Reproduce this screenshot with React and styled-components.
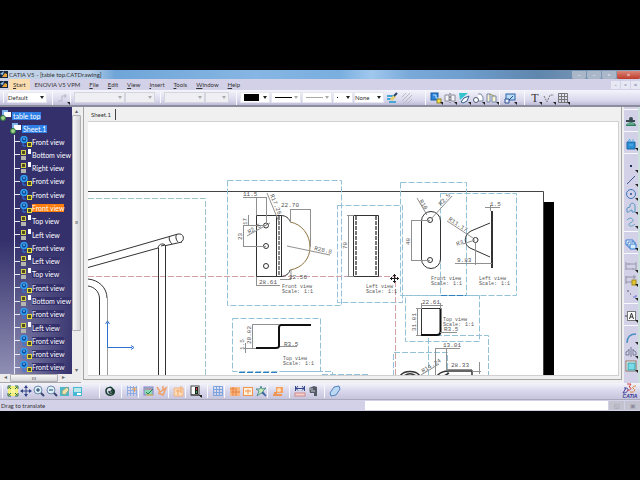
import React from 'react';
import styled, { createGlobalStyle } from 'styled-components';

const MENUS = ['Start', 'ENOVIA V5 VPM', 'File', 'Edit', 'View', 'Insert', 'Tools', 'Window', 'Help'];

const VIEWS = [
    'Front view', 'Bottom view', 'Right view', 'Front view', 'Front view', 'Front view',
    'Top view', 'Left view', 'Front view', 'Left view', 'Top view', 'Front view',
    'Bottom view', 'Front view', 'Left view', 'Front view', 'Front view', 'Front view',
];
const ACTIVE_VIEW = 5;

const RAIL = [
    ['workbench'],
    ['select'],
    ['point', 'line', 'circle', 'profile', 'spline'],
    ['instantiate'],
    ['dimension', 'chained', 'datum'],
    ['frame'],
    ['corner', 'symmetry', 'area'],
];

const VIEW_TOOLS = [
    { lead: 2, icons: ['fit', 'pan', 'zoomIn', 'zoomOut', 'normal', 'multi'] },
    { lead: 15, icons: ['update'] },
    { lead: 5, icons: ['snap'] },
    { lead: 0, icons: ['analysis', 'constraint'] },
    { lead: 0, icons: ['filter'] },
    { lead: 0, icons: ['dressup'] },
    { lead: 5, icons: ['grid'] },
    { lead: 0, icons: ['orangeGrid', 'orangeBox', 'star'] },
    { lead: 0, icons: ['orangeShape'] },
    { lead: 5, icons: ['measure', 'measureItem'] },
    { lead: 5, icons: ['eraser'] },
];

// 아이콘 (12 x 12)
const GLYPHS = {
    polyline: <path d="M1 9h4V4h5M8 2v4" stroke="#b5b5c4" />,
    paint: <><path d="M1 4h6M1 7h6M3 10h7" stroke="#49a7d8" strokeWidth="2" /><path d="M5 8l4-4" stroke="#e8cf74" strokeWidth="3" /><path d="M8 4l3-3" stroke="#28446d" strokeWidth="2" /></>,
    hatch: <path d="M1 5l4-4M1 9l8-8M2 12l9-9M6 12l5-5" stroke="#b9b9c2" />,
    viewFront: <><rect x="1" y="1" width="7" height="7" fill="#2f83d8" stroke="#175a9f" /><path d="M3 3h3v3h3" stroke="#bfe3ff" /><rect x="7" y="7" width="4" height="4" fill="#f4e04a" stroke="#8f8830" /></>,
    section: <><path d="M1 3h4v6H1zM7 3h4v6H7z" fill="#f4f4fb" stroke="#8a8a94" /><path d="M6 1v10" stroke="#666" strokeDasharray="2 1" /></>,
    detail: <><path d="M1 1h9L2 8z" fill="#35c3cf" /><path d="M3 10l3-4 5-2-2 5-4 2z" fill="#fff" stroke="#355f93" /></>,
    clip: <><path d="M6 2h3l2 3v4H6" fill="#fff" stroke="#7887a4" /><circle cx="4" cy="8" r="2.5" fill="#fff" stroke="#4f5c78" /></>,
    broken: <><path d="M1 2h3v8H1zM6 4h4v6H6z" fill="#f8f5cd" stroke="#7786aa" /><path d="M4 2l4 2" stroke="#8d934c" /></>,
    wizard: <><rect x="2" y="2" width="9" height="6" fill="#b9dcf7" stroke="#2d60a8" /><path d="M1 11V7h4v4zM5 8l4-4" fill="#e8f1fb" stroke="#284c8b" /></>,
    rough: <path d="M1 4l3 6 3-7h4" stroke="#777" strokeDasharray="2 1" />,
    table: <path d="M1.500 1.500h9v9h-9zM1 4.500h10M1 7.500h10M4.500 1v10M7.500 1v10" stroke="#777" />,
    workbench: <><path d="M1 10c0-5 10-5 10 0z" fill="#2f7c62" /><path d="M1 4h9v2H1z" fill="#37474f" /><circle cx="6" cy="3" r="2" fill="#37474f" /><path d="M2 8h7" stroke="#8ed1a7" /></>,
    select: <><path d="M2 4h8v7H2z" fill="#2d8fd5" stroke="#1a67a8" /><path d="M3 3l2-2v3M8 1v3M4 7h4" stroke="#5ab4e8" /></>,
    point: <rect x="5" y="5" width="2" height="2" fill="#222f55" />,
    line: <path d="M2 10l8-8" stroke="#3f568c" />,
    circle: <><circle cx="6" cy="6" r="4.5" stroke="#3c78bb" /><circle cx="6" cy="6" r="1" fill="#234f8b" /></>,
    profile: <path d="M2 10V6l3-1V3c1-3 5-2 5 1v6H7V8C5 7 5 11 2 10z" stroke="#5698c3" />,
    spline: <path d="M2 4c3-3 5-2 6 0s-5 3-4 5 4 1 6-1" stroke="#5ba1bf" />,
    instantiate: <><path d="M1 2h7v5H1z" fill="#fff" stroke="#3379ce" /><path d="M3 4h7v5H3z" fill="#fff" stroke="#3379ce" /><path d="M5 6h6v5H5z" fill="#d6ebff" stroke="#3379ce" /></>,
    dimension: <path d="M1 2v8M11 2v8M1 4h10M1 9h10M4 3v2M8 8v2" stroke="#9898aa" />,
    chained: <><path d="M1 2v8M1 3h10M1 8h6M9 1v4" stroke="#9090a2" /><rect x="7" y="6" width="4" height="5" fill="#e4c52f" stroke="#a08c20" /></>,
    datum: <><path d="M2 3h2M5 6h1" stroke="#555" /><path d="M8 9h3V7" stroke="#6672d3" /></>,
    frame: <><rect x="2.500" y="1.500" width="8" height="9" fill="#fff" stroke="#777" /><path d="M4.500 9L6.500 3L8.500 9M5 7h3M0 6h2" stroke="#333" /></>,
    corner: <path d="M2 11C2 5 5 2 11 2" stroke="#4b8ec0" strokeWidth="1.5" />,
    symmetry: <path d="M6 1v10M4 3v6M8 3v6M4 4L1 6v3h3M8 4l3 2v3H8" stroke="#777d96" />,
    area: <><rect x="1" y="1" width="10" height="10" fill="#fff" stroke="#8c7462" /><rect x="3" y="3" width="7" height="7" fill="#78dbe5" stroke="#359fae" /></>,
    fit: <><rect x="1" y="1" width="10" height="10" fill="#f4ee7c" /><path d="M2 2l8 8M10 2l-8 8M1 4V1h3M8 1h3v3M1 8v3h3M8 11h3V8" stroke="#266c50" /><rect x="4" y="4" width="4" height="4" fill="#f8f5a0" /></>,
    pan: <><path d="M6 1v10M1 6h10" stroke="#34458a" /><path d="M4 3l2-3 2 3M4 9l2 3 2-3M3 4L0 6l3 2M9 4l3 2-3 2" fill="#34458a" /></>,
    zoomIn: <><circle cx="5" cy="5" r="4" fill="#d8f1f5" stroke="#7288ae" /><path d="M3 5h4M5 3v4" stroke="#26386b" /><path d="M8 8l3 3" stroke="#394671" strokeWidth="2" /></>,
    zoomOut: <><circle cx="5" cy="5" r="4" fill="#d8f1f5" stroke="#7288ae" /><path d="M3 5h4" stroke="#26386b" /><path d="M8 8l3 3" stroke="#394671" strokeWidth="2" /></>,
    normal: <><rect x="1" y="2" width="9" height="9" fill="#51b8cb" /><path d="M3 9V6l5-4 2 3-4 5z" fill="#efe1a7" stroke="#7aa48b" /></>,
    multi: <><rect x="1" y="2" width="9" height="9" fill="#49b8d5" /><path d="M2 3h7v4H2z" fill="#b8e8e8" /><path d="M5 9h4" stroke="#fff" strokeWidth="2" /></>,
    update: <><path d="M2 7c-1-6 8-6 7-1 0 3-4 3-4 0M10 5c2 6-7 7-8 2M10 5c-1-1-3 0-3 2" stroke="#163a2d" strokeWidth="1.5" /></>,
    snap: <><path d="M1.500 1v10M4.500 1v10M7.500 1v10M10.500 1v10M1 2.500h10M1 5.500h10M1 8.500h10" stroke="#8eaee2" /><path d="M6 4h5M8.500 2v5" stroke="#e9a55c" /></>,
    analysis: <><rect x="1" y="2" width="9" height="8" fill="#8ad8b4" stroke="#8a7ad0" /><path d="M2 4h7" stroke="#d256a5" /><path d="M3 7l2 2 5-5" stroke="#2d7f53" /><path d="M3 10h7" stroke="#e5c338" /></>,
    constraint: <path d="M1 2l3 5 6-4-3 7-5-2M7 1v5" stroke="#efa16a" strokeWidth="1.5" />,
    filter: <><path d="M1 3h9v8H1z" fill="#fbdcb8" stroke="#f3b080" /><path d="M3 6h5M5 4v6M8 1v7" stroke="#f3a86c" /></>,
    dressup: <><rect x="1" y="1" width="8" height="9" fill="#fff" stroke="#444" /><path d="M5 2h3v7H5z" fill="#222" /><path d="M6 4h1" stroke="#e33" strokeWidth="2" /><path d="M6 7h1" stroke="#3b5" strokeWidth="2" /><path d="M1 10h8l2 2" stroke="#333" /></>,
    grid: <path d="M1.500 1.500h9v9h-9zM1 4.500h10M1 7.500h10M4.500 1v10M7.500 1v10" stroke="#7ba3dd" />,
    orangeGrid: <><path d="M1 2h10v9H1z" fill="#f8b883" /><path d="M1 4h7M4 2v9M7 5v6M2 7h9" stroke="#e8803f" /></>,
    orangeBox: <><rect x="1.500" y="2.500" width="9" height="8" fill="#fff0d8" stroke="#ef9551" /><path d="M3 6h6M6 4v5" stroke="#ef9551" /></>,
    star: <><path d="M6 1l1 3 4-1-3 3 2 4-4-2-4 3 2-5-3-2h4z" fill="#c7efb2" stroke="#5a9098" /><path d="M7 7l4 4" stroke="#345ea8" strokeWidth="1.5" /></>,
    orangeShape: <><path d="M4 2h7v6H4z" fill="#f5a35f" /><path d="M1 10h9M2 8h3" stroke="#ee9556" strokeWidth="2" /><circle cx="7" cy="5" r="2" fill="#ffe0b7" /></>,
    measure: <><path d="M1.500 1v5M10.500 1v5M1 3.500h10M4 1L2 3.500l2 2M8 1l2 2.500-2 2" stroke="#37478d" /><rect x="1" y="8" width="10" height="3" fill="#f7d4ca" stroke="#cf8a90" /></>,
    measureItem: <><path d="M2 3l5-2 3 1v9H7V8H3z" fill="#555b66" /><path d="M2 4h4M4 6h4" stroke="#c8cbd0" /></>,
    eraser: <path d="M1 8l4-6 5-1 1 3-4 6-5 1z" fill="#bcd9f4" stroke="#5381bd" />,
};

const Glyph = ({ name }) => (
    <svg width="12" height="12" viewBox="0 0 12 12" fill="none" aria-hidden="true">
        {GLYPHS[name]}
    </svg>
);

const Caret = ({ muted }) => (
    <svg width="4" height="3" viewBox="0 0 4 3" aria-hidden="true">
        <path d="M0 0h4L2 3z" fill={muted ? '#aaa' : '#222'} />
    </svg>
);

const Corner = () => (
    <CornerMark viewBox="0 0 3 3" aria-hidden="true"><path d="M0 0h3v3z" fill="#222" /></CornerMark>
);

const Tool = ({ name, size = 14, more, letter }) => (
    <ToolButton type="button" aria-label={name} $size={size}>
        {letter ? <Letter>{letter}</Letter> : <Glyph name={name} />}
        {more && <Corner />}
    </ToolButton>
);

const Picker = ({ label, width, value = '', muted, disabled, children }) => (
    <PickerBox $width={width} $disabled={disabled}>
        <select aria-label={label} disabled={disabled} defaultValue={value}>
            <option value={value}>{value}</option>
        </select>
        <PickerFace>
            <span>{children}</span>
            <Caret muted={muted || disabled} />
        </PickerFace>
    </PickerBox>
);

const Logo = () => (
    <svg width="8" height="9" viewBox="0 0 8 9" aria-hidden="true">
        <rect y="1" width="8" height="7" fill="#17263f" />
        <path d="M2 7l3-4 2 1v3z" fill="#e8a23c" />
        <path d="M0 4l4-3-1 4z" fill="#8fc0ea" />
    </svg>
);

const ViewIcon = ({ front }) => (
    <svg width="12" height="12" viewBox="0 0 12 12" fill="none" aria-hidden="true">
        {front ? (
            <>
                <circle cx="4" cy="3.5" r="3" fill="#0f4f9e" stroke="#2fa0f4" strokeWidth="1.5" />
                <path d="M3 7v3h3" stroke="#2c7be6" />
                <path d="M3 3h2" stroke="#9ed8ff" />
                <rect x="7.5" y="6.5" width="4" height="4" fill="#4a4a20" stroke="#e3dc3a" />
            </>
        ) : (
            <>
                <rect x="1.5" y="1.5" width="4" height="4" fill="#4a4a20" stroke="#d8d04a" />
                <rect x="1" y="7" width="5" height="4" fill="#b5b5b0" />
                <rect x="8" y="0" width="3" height="5" fill="#fff" />
            </>
        )}
    </svg>
);

const RootIcon = () => (
    <svg width="11" height="11" viewBox="0 0 11 11" aria-hidden="true">
        <rect x="2" y="0" width="6" height="5" fill="#7fb2e8" />
        <rect x="4" y="2" width="7" height="5" fill="#fff" />
        <circle cx="3" cy="8" r="2.5" fill="#9fcf8a" stroke="#2e7a3c" />
    </svg>
);

const Note = ({ x, y, title }) => (
    <text x={x} y={y}>
        <tspan>{title}</tspan>
        <tspan x={x} dy="5">Scale:</tspan>
        <tspan x={x + 22}>1:1</tspan>
    </text>
);

const Dim = ({ x, y, turn = 0, children }) => (
    <text className="dim" transform={`translate(${x} ${y}) rotate(${turn})`}>{children}</text>
);

const Drawing = () => (
    <SheetCanvas role="img" aria-label="table top drawing">
        <g transform="translate(-88 -122)" fill="none">
            <rect x="543" y="202" width="11" height="180" fill="#000" />
            <path d="M88 191.5H543.5V382" stroke="#444" />

            <g className="bound">
                <path d="M88 198.5H205.5V376" stroke="#9cc3c6" />
                <path d="M227.5 180.5H341.5V305.5H227.5z" />
                <path d="M337.5 205.5H402.5V302.5H337.5z" />
                <path d="M400.5 182.5H466.5V295.5H400.5z" />
                <path d="M440.5 193.5H516.5V295.5H440.5z" />
                <path d="M405.5 295.5H479.5V341.5H405.5z" />
                <path d="M428.5 376V335.5H488.5V376" />
                <path d="M393.5 376V352.5H447.5V376" />
                <path d="M232.5 318.5H320.5V371.5H232.5z" />
                <path d="M285 371.5H332.5V376M322 374.5H368" />
                <path d="M239 372.5H277M441 295.5H466" stroke="#2f7fc0" />
            </g>
            <path d="M88 276.5H395.5V376" stroke="#d3a0a6" strokeDasharray="6 2" />

            <g stroke="#333">
                <path d="M88 260L178 234M88 267.500L158 248M166 245.500L182 242" />
                <path d="M178 234c6-1 7 6 3 8M170 236c-2 2 0 6 2 8M177 234c-2 2-1 6 1 8M158 248c1-5 6-5 8-2M161 246l4-1" />
                <path d="M158.500 248V376M165.500 246V376M99.500 298V376" />
                <path d="M88 279C99 280 107 288 107 298M88 286C95 287 99 292 99.500 298" />
                <path d="M107.500 298V376" stroke="#999" />
            </g>
            <path d="M107.500 347.500V323M107.500 347.500H132M105.500 324l2-3 2 3M131 345.500l3 2-3 2" stroke="#2f6fce" />

            <g stroke="#333">
                <path d="M256.500 215.500H282M256.500 215.500V276.500H282M276.500 215V277M281.500 215V277" />
                <path d="M279 216V276" stroke="#888" strokeWidth="2" strokeDasharray="4 1" />
                <circle cx="266" cy="225.500" r="2.500" />
                <circle cx="266" cy="246" r="2.500" />
                <circle cx="266" cy="266" r="2.500" />
                <path d="M281 215.500c5 0 8 3 9 6M290 270c-1 4-4 6-9 6.500" />
                <path d="M290 222C302 224 310 235 310 247S302 268 290 270" stroke="#8e7442" />
                <path d="M353.500 215.500H378.500V276.500H353.500z" />
                <path d="M356 216V276M376 216V276" stroke="#777" strokeWidth="2" strokeDasharray="4 1" />
                <rect x="421.500" y="211.500" width="19" height="57" rx="9.500" />
                <circle cx="430" cy="220" r="2.500" />
                <circle cx="430" cy="260" r="2.500" />
                <path d="M490 223L471 231C463 235 464 245 470 248L490 257" />
                <circle cx="475.500" cy="240" r="2.500" />
                <path d="M492 211V268" strokeWidth="2" />
                <path d="M421.500 334V308.500H440" />
                <path d="M440.500 308V332Q440 335 437 335H421" stroke="#111" strokeWidth="2" />
                <path d="M311 325H281Q279 325 279 328V346Q279 348 276 348H256" stroke="#111" strokeWidth="2" />
                <path d="M400 376C404 370 416 370 420 376M404 376C408 373 412 373 416 376M437 376C440 372 444 371 449 371H472V376M444 376L449 373" strokeWidth="1.500" />
            </g>

            <g stroke="#909090">
                <path d="M290 209.500H311M290.500 209V222M310.500 209V247M243 197.500H266M256.500 197V215M266.500 197V225" />
                <path d="M248.500 215V226M243.500 225V246M243 225.500H266M243 246.500H266M247 236L270 223M267 193L279 222" />
                <path d="M287 246L330 255M256 285.500H280M256.500 277V286M280 279.500H291V270" />
                <path d="M348.500 215V276M347 215.500H354M347 276.500H354" />
                <path d="M411.500 220V260M411 220.500H430M411 260.500H430M417 198L427 215M431 219L452 196" />
                <path d="M447 221L473 238M463 244L475 240M475.500 243V265M455 263.500H492M485 207.500H500M490.500 205V211" />
                <path d="M421 305.500H443M421.500 303V309M440.500 303V309M417.500 308V335M416 308.500H421M416 335.500H421M440 332.500H457" />
                <path d="M436 348.500H460M435.500 348V376M446.500 348V370M447 369.500H472M421 375L439 364M479.500 362V374M472 371.500H481" />
                <path d="M252.500 324V348M252 324.500H279M244 348.500H256M245.500 343V353M280 346.500H297" />
            </g>

            <Dim x={281} y={207}>22.70</Dim>
            <Dim x={243} y={196}>11.5</Dim>
            <Dim x={270} y={195} turn={68}>R17.26</Dim>
            <Dim x={247} y={225} turn={-90}>17</Dim>
            <Dim x={242} y={240} turn={-90}>23</Dim>
            <Dim x={249} y={234} turn={-30}>R2.5</Dim>
            <Dim x={314} y={250} turn={12}>R28.8</Dim>
            <Dim x={259} y={284}>28.61</Dim>
            <Dim x={289} y={279}>22.56</Dim>
            <Dim x={347} y={249} turn={-90}>70</Dim>
            <Dim x={410} y={245} turn={-90}>40</Dim>
            <Dim x={419} y={201} turn={58}>R10</Dim>
            <Dim x={441} y={206} turn={-48}>R2.5</Dim>
            <Dim x={448} y={220} turn={34}>R11.17</Dim>
            <Dim x={457} y={246} turn={-20}>R3</Dim>
            <Dim x={457} y={262}>9.83</Dim>
            <Dim x={490} y={206}>1.5</Dim>
            <Dim x={422} y={304}>22.61</Dim>
            <Dim x={416} y={331} turn={-90}>31.01</Dim>
            <Dim x={444} y={331}>R3.5</Dim>
            <Dim x={443} y={347}>13.01</Dim>
            <Dim x={423} y={373} turn={-32}>R14.24</Dim>
            <Dim x={451} y={367}>28.33</Dim>
            <Dim x={251} y={344} turn={-90}>28.02</Dim>
            <Dim x={244} y={350} turn={-90}>1.5</Dim>
            <Dim x={284} y={346}>R3.5</Dim>

            <Note x={282} y={288} title="Front view" />
            <Note x={366} y={288} title="Left view" />
            <Note x={431} y={280} title="Front view" />
            <Note x={479} y={280} title="Left view" />
            <Note x={443} y={321} title="Top view" />
            <Note x={283} y={360} title="Top view" />

            <path d="M394.500 274V283M390 278.500H399M393 275.500h3M393 281.500h3M391.500 277v3M397.500 277v3" stroke="#222" />
        </g>
    </SheetCanvas>
);

const App = () => {
    return (
        <>
            <GlobalStyle />
            <Frame>
                <TitleBar>
                    <Logo />
                    <h1>CATIA V5 - [table top.CATDrawing]</h1>
                    <WindowButtons>
                        <button type="button" aria-label="help">–</button>
                        <button type="button" aria-label="minimize">–</button>
                        <button type="button" aria-label="restore">▫</button>
                        <button type="button" aria-label="close" className="close">×</button>
                    </WindowButtons>
                </TitleBar>

                <MenuBar>
                    <Logo />
                    {MENUS.map((menu, i) => (
                        <MenuButton key={menu} type="button" $now={i === 0}>
                            {i === 1 ? menu : <><u>{menu[0]}</u>{menu.slice(1)}</>}
                        </MenuButton>
                    ))}
                    <ChildButtons>
                        <button type="button" aria-label="minimize sheet">-</button>
                        <button type="button" aria-label="restore sheet">▫</button>
                        <button type="button" aria-label="close sheet">×</button>
                    </ChildButtons>
                </MenuBar>

                <ToolBar>
                    <Group $lead={3}><Picker label="Style" width={40} value="Default" /></Group>
                    <Group $lead={5}><Tool name="polyline" more /></Group>
                    <Group $lead={0}>
                        <Picker label="Font" width={51} disabled />
                        <Picker label="Font size" width={30} disabled />
                    </Group>
                    <Group $lead={5}>
                        <Picker label="Tolerance" width={41} disabled />
                        <Picker label="Precision" width={24} disabled />
                    </Group>
                    <Group $lead={7} $gap={1}>
                        <Picker label="Color" width={30}><Swatch $width={15} $height={7} /></Picker>
                        <Picker label="Line thickness" width={30} muted><Swatch $width={17} $height={1} /></Picker>
                        <Picker label="Line type" width={30} muted><Swatch $width={17} $height={1} $muted /></Picker>
                        <Picker label="Point type" width={20}><Swatch $width={1} $height={1} /></Picker>
                        <Picker label="Layer" width={30} value="None" />
                        <Tool name="paint" />
                        <Tool name="hatch" />
                    </Group>
                    <Group $lead={11}>
                        <Tool name="viewFront" more />
                        <Tool name="section" more />
                        <Tool name="detail" more />
                        <Tool name="clip" more />
                        <Tool name="broken" more />
                    </Group>
                    <Group $lead={0}><Tool name="wizard" more /></Group>
                    <Group $lead={7}>
                        <Tool name="text" letter="T" more />
                        <Tool name="rough" more />
                        <Tool name="table" more />
                    </Group>
                </ToolBar>

                <Workspace>
                    <TreePanel>
                        <Tree>
                            <RootRow><RootIcon /><RootLabel>table top</RootLabel></RootRow>
                            <RootRow $child><RootIcon /><RootLabel>Sheet.1</RootLabel></RootRow>
                            <ViewList>
                                {VIEWS.map((view, i) => (
                                    <li key={i}>
                                        <ViewIcon front={view === 'Front view'} />
                                        <ViewLabel $now={i === ACTIVE_VIEW}>{view}</ViewLabel>
                                    </li>
                                ))}
                            </ViewList>
                        </Tree>
                        <ScrollY>
                            <i>▴</i>
                            <b>≡</b>
                            <i>▾</i>
                        </ScrollY>
                        <ScrollX>
                            <i>◂</i>
                            <b>ııı</b>
                            <i>▸</i>
                        </ScrollX>
                    </TreePanel>

                    <Document>
                        <Tabs><button type="button">Sheet.1</button></Tabs>
                        <Sheet><Drawing /></Sheet>
                    </Document>

                    <Rail>
                        {RAIL.map((group, i) => (
                            <RailGroup key={i}>
                                {group.map((name) => (
                                    <Tool key={name} name={name} more={name !== 'workbench'} />
                                ))}
                            </RailGroup>
                        ))}
                    </Rail>
                </Workspace>

                <BottomBar>
                    {VIEW_TOOLS.map((group, i) => (
                        <Group key={i} $lead={group.lead}>
                            {group.icons.map((name) => (
                                <Tool key={name} name={name} size={13} more={name === 'dressup'} />
                            ))}
                        </Group>
                    ))}
                    <Brand>
                        <svg width="16" height="11" viewBox="0 0 16 11" fill="none" aria-hidden="true">
                            <path d="M2 5c6-1 5 5-1 5l3-5" stroke="#3f3f9c" />
                            <path d="M5 1h4L7 4c4 1 1 4-2 3" stroke="#d3433c" />
                            <path d="M14 3c-4 0-4 2-2 3s0 4-4 3" stroke="#e28a3a" />
                        </svg>
                        <span>CATIA</span>
                    </Brand>
                </BottomBar>

                <StatusBar>
                    <output>Drag to translate</output>
                    <input type="text" aria-label="Power input" />
                    <button type="button" aria-label="dialog">◱</button>
                    <button type="button" aria-label="knowledge">▣</button>
                </StatusBar>
            </Frame>
        </>
    );
};

const GlobalStyle = createGlobalStyle`
    *{
        box-sizing: border-box;
        margin: 0;
        padding: 0;
    }

    body{
        background-color: #000;
        color: #333;
        font: 6px/8px Lato, "Noto Sans", sans-serif;
    }

    button, input, select{
        border: 0;
        background: none;
        color: inherit;
        font: inherit;
    }

    svg{
        display: block;
        flex: none;
    }

    ul{
        list-style: none;
    }
`

const Frame = styled.main`
    margin: 70px 0px;
    background-color: #d3d1e8;
    overflow: hidden;
`

const TitleBar = styled.header`
    display: flex;
    align-items: center;
    height: 9px;
    background: linear-gradient(90deg, #c5d3e6 0%, #b9cfe8 14%, #6fa5d8 18%, #86b6e3 40%, #79aedf 53%, #a0c8ee 58%, #79a9d8 64%, #6f9fcf 72%, #5f86ad 84%, #8fa3bb 100%);

    h1{
        margin-left: 1px;
        font: inherit;
        white-space: nowrap;
    }
`

const WindowButtons = styled.div`
    display: flex;
    gap: 1px;
    height: 8px;
    margin-left: auto;

    button{
        width: 14px;
        border-radius: 0px 0px 2px 2px;
        background-color: #a9b7c9;
        color: #fff;
        line-height: 7px;
    }

    button.close{
        width: 23px;
        background: linear-gradient(#d98878, #bf3a2a);
    }
`

const MenuBar = styled.nav`
    display: flex;
    align-items: center;
    gap: 1px;
    height: 11px;
    background-color: #d3d1e8;
`

const MenuButton = styled.button`
    height: 11px;
    padding: 0px 4px;
    background-color: ${({ $now }) => $now ? '#fbdcae' : 'transparent'};
    white-space: nowrap;
`

const ChildButtons = styled.div`
    display: flex;
    gap: 1px;
    margin-left: auto;

    button{
        width: 9px;
        height: 8px;
        background-color: #e6e8f4;
        color: #55668a;
        line-height: 7px;
    }
`

const ToolBar = styled.div`
    display: flex;
    align-items: center;
    height: 17px;
    background: linear-gradient(#f4f4fb, #d8d7ec 70%, #bdbcd6);
    border-bottom: 2px solid #8c8c9c;
`

const Group = styled.div`
    display: flex;
    align-items: center;
    gap: ${({ $gap }) => $gap || 0}px;
    margin-left: ${({ $lead }) => $lead}px;
    padding-left: 3px;
    border-left: 1px solid #f8f8ff;
`

const ToolButton = styled.button`
    position: relative;
    display: flex;
    align-items: center;
    justify-content: center;
    flex: none;
    width: ${({ $size }) => $size}px;
    height: ${({ $size }) => $size}px;
`

const Letter = styled.span`
    font: 12px/12px "Liberation Serif", serif;
`

const CornerMark = styled.svg`
    position: absolute;
    right: 0;
    bottom: 0;
    width: 3px;
    height: 3px;
`

const PickerBox = styled.div`
    position: relative;
    width: ${({ $width }) => $width}px;
    height: 11px;
    background-color: ${({ $disabled }) => $disabled ? '#efeff3' : '#fff'};
    border: 1px solid ${({ $disabled }) => $disabled ? '#d5d5df' : '#e6e6ee'};

    select{
        display: block;
        appearance: none;
        width: 100%;
        height: 9px;
        line-height: 9px;
    }
`

const PickerFace = styled.div`
    position: absolute;
    inset: 0;
    display: flex;
    align-items: center;
    justify-content: space-between;
    padding: 0px 2px;
    pointer-events: none;
`

const Swatch = styled.span`
    display: block;
    width: ${({ $width }) => $width}px;
    height: ${({ $height }) => $height}px;
    margin-left: 1px;
    background-color: ${({ $muted }) => $muted ? '#aaa' : '#000'};
`

const Workspace = styled.section`
    display: grid;
    grid-template-columns: 81px 1fr 16px;
    height: 276px;
    background-color: #f0f0f0;
`

const TreePanel = styled.aside`
    display: grid;
    grid-template-columns: 1fr 9px;
    grid-template-rows: 1fr 8px;
    min-height: 0;
    border-bottom: 1px solid #aaa;
`

const Tree = styled.div`
    display: flex;
    flex-direction: column;
    min-height: 0;
    overflow: hidden;
    padding-top: 2px;
    background: linear-gradient(100deg, transparent 50%, #33306b 100%), linear-gradient(#33306b 50%, #8f8fb4);
    color: #fff;
    font-size: 7px;
`

const RootRow = styled.div`
    display: flex;
    align-items: center;
    gap: 1px;
    height: 13px;
    padding-left: ${({ $child }) => $child ? 10 : 0}px;
`

const RootLabel = styled.span`
    padding: 0px 1px;
    background-color: #2e7fe6;
    white-space: nowrap;
`

const ViewList = styled.ul`
    display: flex;
    flex: 1;
    flex-direction: column;
    margin-left: 14px;
    border-left: 1px solid #e8e8f4;

    li{
        display: flex;
        flex: 1;
        align-items: center;
        min-height: 0;
    }

    li::before{
        content: "";
        width: 5px;
        height: 1px;
        background-color: #e8e8f4;
    }
`

const ViewLabel = styled.span`
    background-color: ${({ $now }) => $now ? '#ff7d0a' : '#33306b'};
    white-space: nowrap;
`

const ScrollY = styled.div`
    display: flex;
    flex-direction: column;
    background-color: #ececec;
    color: #666;
    text-align: center;

    i, b{
        font-style: normal;
        font-weight: normal;
    }

    b{
        display: flex;
        flex: 5;
        align-items: center;
        justify-content: center;
        background: linear-gradient(90deg, #f8f8f8, #d4d4d8);
        border: 1px solid #b0b0b4;
        border-radius: 1px;
    }

    i:last-child{
        flex: 1;
        display: flex;
        align-items: flex-end;
        justify-content: center;
    }
`

const ScrollX = styled.div`
    display: flex;
    grid-column: 1 / 3;
    background-color: #ececec;
    color: #666;
    line-height: 6px;
    text-align: center;

    i, b{
        width: 10px;
        font-style: normal;
        font-weight: normal;
    }

    b{
        width: 48px;
        background: linear-gradient(#f8f8f8, #d4d4d8);
        border: 1px solid #b0b0b4;
        border-radius: 1px;
    }
`

const Document = styled.div`
    display: flex;
    flex-direction: column;
    min-width: 0;
    margin: 0px 2px 3px;
    padding: 0px 2px 3px 4px;
    border: 1px solid #a5a5a5;
    border-top: 0;
`

const Tabs = styled.div`
    height: 14px;
    padding-top: 2px;

    button{
        height: 11px;
        padding: 0px 4px 0px 3px;
        border-right: 1px solid #444;
    }
`

const Sheet = styled.div`
    flex: 1;
    min-height: 0;
    background-color: #fff;
    border: 1px solid #d0d0d0;
    border-left: 0;
`

const SheetCanvas = styled.svg`
    width: 100%;
    height: 100%;
    overflow: hidden;

    .bound path{
        stroke-dasharray: 6 2;
    }

    .bound path:not([stroke]){
        stroke: #93c1d8;
    }

    text{
        fill: #555;
        font: 5px "Liberation Mono", monospace;
    }

    text.dim{
        font-size: 6px;
    }
`

const Rail = styled.div`
    padding-top: 2px;
    background-color: #d3d1e8;
    border-right: 2px solid #cbe2dc;
`

const RailGroup = styled.div`
    padding: 5px 0px 2px;
    border-top: 1px solid #f8f8ff;
`

const BottomBar = styled.div`
    display: flex;
    align-items: center;
    height: 17px;
    background: linear-gradient(#f4f4fb, #d8d7ec 50%, #c6c5dd);
    border-bottom: 1px solid #a9a9bd;
`

const Brand = styled.div`
    display: flex;
    flex-direction: column;
    align-items: center;
    margin-left: auto;
    padding-right: 2px;
    color: #34358c;

    span{
        font: italic bold 5px/5px "Liberation Sans", sans-serif;
    }
`

const StatusBar = styled.footer`
    display: grid;
    grid-template-columns: 3fr 2fr 15px 15px;
    align-items: center;
    gap: 1px;
    height: 11px;

    output{
        padding-left: 1px;
    }

    input{
        width: 100%;
        height: 9px;
        background-color: #fff;
    }

    button{
        height: 9px;
        background-color: #c3c3d0;
        color: #8e8e9c;
    }
`

export default App;
